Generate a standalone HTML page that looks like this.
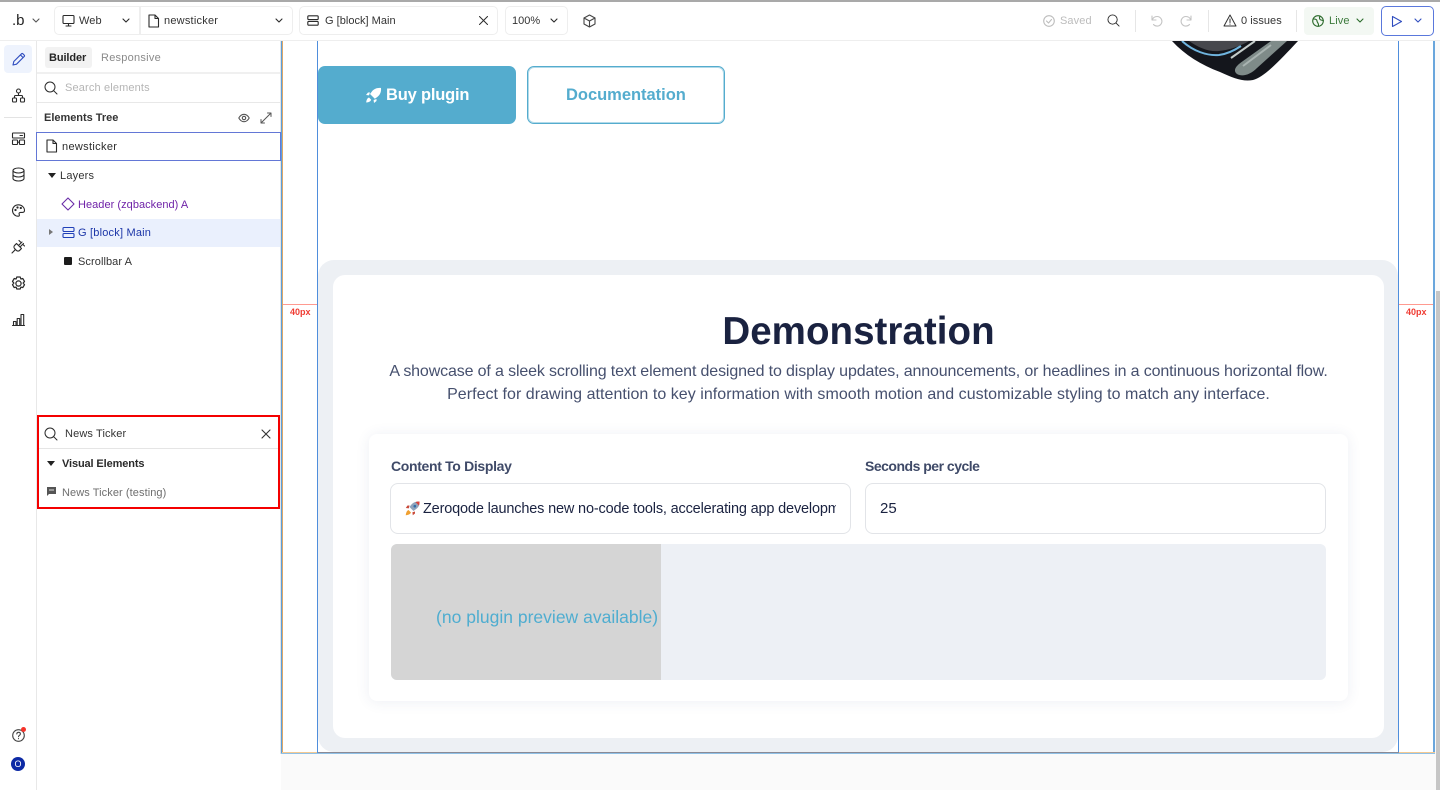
<!DOCTYPE html>
<html><head><meta charset="utf-8"><style>
*{box-sizing:border-box;margin:0;padding:0}
html,body{width:1440px;height:790px;overflow:hidden;background:#fff;font-family:"Liberation Sans",sans-serif}
#r{position:relative;width:1440px;height:790px;overflow:hidden}
.a{position:absolute}
.t{position:absolute;white-space:nowrap;line-height:16px;font-size:11px;color:#303030}
svg.i{position:absolute;fill:none;stroke:#2a2a2a;stroke-width:1.1;stroke-linecap:round;stroke-linejoin:round}
.bx{position:absolute;background:#fff;border:1px solid #eeeeee;border-radius:5px}
.vs{position:absolute;width:1px;background:#e6e6e6}
</style></head><body><div id="r">

<!-- canvas -->
<div class="a" style="left:281px;top:41px;width:1159px;height:749px;background:#fafafa"></div>
<div class="a" style="left:282px;top:41px;width:1153px;height:712px;background:#fff"></div>
<div class="a" style="left:281px;top:41px;width:2px;height:713px;background:#dfa868"></div>
<div class="a" style="left:281px;top:41px;width:1px;height:713px;background:#5a9fdc"></div>
<div class="a" style="left:1433px;top:41px;width:2px;height:713px;background:#6aa6dc"></div>
<div class="a" style="left:282px;top:752px;width:1153px;height:1px;background:#f5c990"></div>
<div class="a" style="left:281px;top:753px;width:1154px;height:1px;background:#8fc0e6"></div>
<div class="a" style="left:1436px;top:291px;width:4px;height:499px;background:#c6c6c6"></div>

<!-- image bit -->
<svg class="a" style="left:1165px;top:41px" width="135" height="42" viewBox="0 0 135 42">
<path d="M7 0 C20 14 36 24 55 31 C68 37 78 41 88 39 C100 36 118 16 133 0Z" fill="#14161c"/>
<path d="M24 0 C34 7 44 11 54 10 C64 9 76 5 84 0Z" fill="#47484d"/>
<path d="M17 0 C28 10 42 15 54 14 C62 13 70 9 76 5" fill="none" stroke="#6fb4de" stroke-width="2"/>
<path d="M72 33 C67 29 72 24 78 20 L106 0 L122 0 L92 27 C85 34 77 36 72 33Z" fill="#7f8b89"/>
<path d="M66 17 L90 0" stroke="#c4ccca" stroke-width="2" fill="none"/>
<path d="M78 25 L106 4" stroke="#a9b3b1" stroke-width="2" fill="none"/>
</svg>

<!-- buttons -->
<div class="a" style="left:318px;top:66px;width:198px;height:58px;background:#54acce;border-radius:7px"></div>
<svg class="a" style="left:365px;top:87px" width="17" height="17" viewBox="0 0 17 17" fill="#fff"><path d="M16 1c-4-.4-7 1-9.300 3.700L5 7l4.800 4.800 2.300-1.700C15 8 16.400 5 16 1zM5 5.500H3L1 8l3 .4zM11.500 12v2L9 16l-.4-3zM4 10.500c-1.500.5-2.500 2-2.800 5 3-.3 4.500-1.300 5-2.800z"/></svg>
<div class="t" style="left:386px;top:85px;font-size:16.500px;line-height:20px;font-weight:bold;color:#fff;letter-spacing:-.2px">Buy plugin</div>
<div class="a" style="left:527px;top:66px;width:198px;height:58px;background:#fff;border:1px solid #54acce;box-shadow:inset 0 0 0 1px rgba(84,172,206,.45);border-radius:7px"></div>
<div class="t" style="left:566px;top:85px;font-size:16.500px;line-height:20px;font-weight:bold;color:#54acce;letter-spacing:-.02px">Documentation</div>

<!-- guide + card -->
<div class="a" style="left:318px;top:260px;width:1080px;height:492px;background:#edf0f4;border-radius:16px"></div>
<div class="a" style="left:333px;top:275px;width:1051px;height:463px;background:#fff;border-radius:12px"></div>
<div class="a" style="left:317px;top:41px;width:1px;height:712px;background:#4f8edc"></div>
<div class="a" style="left:1398px;top:41px;width:1px;height:712px;background:#4f8edc"></div>
<div class="a" style="left:318px;top:752px;width:1081px;height:1px;background:#8a8a95"></div>
<div class="a" style="left:283px;top:304px;width:34px;height:1px;background:#ff9a90"></div>
<div class="a" style="left:1399px;top:304px;width:34px;height:1px;background:#ff9a90"></div>
<div class="t" style="left:290px;top:304px;font-size:9px;font-weight:bold;color:#ef3b32">40px</div>
<div class="t" style="left:1406px;top:304px;font-size:9px;font-weight:bold;color:#ef3b32">40px</div>

<div class="t" style="left:333px;width:1051px;text-align:center;top:309px;font-size:38.500px;line-height:46px;font-weight:bold;color:#1a2240;letter-spacing:.05px">Demonstration</div>
<div class="t" style="left:333px;width:1051px;text-align:center;top:361px;font-size:16px;line-height:22px;color:#46506e;letter-spacing:-.14px">A showcase of a sleek scrolling text element designed to display updates, announcements, or headlines in a continuous horizontal flow.</div>
<div class="t" style="left:333px;width:1051px;text-align:center;top:384px;font-size:16px;line-height:22px;color:#46506e;letter-spacing:.04px">Perfect for drawing attention to key information with smooth motion and customizable styling to match any interface.</div>

<div class="a" style="left:369px;top:434px;width:979px;height:267px;background:#fff;border-radius:8px;box-shadow:0 1px 14px rgba(60,80,130,.09)"></div>
<div class="t" style="left:391px;top:458px;font-size:14px;font-weight:bold;color:#3f4a68;letter-spacing:-.33px">Content To Display</div>
<div class="t" style="left:865px;top:458px;font-size:14px;font-weight:bold;color:#3f4a68;letter-spacing:-.5px">Seconds per cycle</div>
<div class="a" style="left:390px;top:483px;width:461px;height:51px;border:1px solid #e2e4e8;border-radius:8px;background:#fff"></div>
<div class="a" style="left:865px;top:483px;width:461px;height:51px;border:1px solid #e2e4e8;border-radius:8px;background:#fff"></div>
<svg class="a" style="left:405px;top:501px" width="15" height="15" viewBox="0 0 15 15"><path d="M14.500.5c-3.500-.3-6.500 1-8.500 3.500L4.500 6l4 4 2-1.500C13.500 6.500 14.800 4 14.500.5z" fill="#8fa3bb"/><path d="M14.500.5c-1.500-.1-2.800.1-4 .6l3.400 3.400c.5-1.200.7-2.600.6-4z" fill="#d8433a"/><circle cx="9.800" cy="5.200" r="1.300" fill="#2f6da8"/><path d="M4.500 4.500H2.500L.8 7l3 .4zM10 10.500v2L7.800 14.200l-.4-3z" fill="#c94a3a"/><path d="M3.500 9c-1.500.6-2.300 2-2.800 5.300 3.300-.5 4.700-1.300 5.300-2.800z" fill="#f0a030"/></svg>
<div class="a" style="left:423px;top:498px;width:413px;height:22px;overflow:hidden"><div class="t" style="left:0;top:0;font-size:14.500px;line-height:22px;color:#1a2240;letter-spacing:-.17px">Zeroqode launches new no-code tools, accelerating app development worldwide</div></div>
<div class="t" style="left:880px;top:498px;font-size:15px;line-height:22px;color:#1a2240">25</div>
<div class="a" style="left:391px;top:544px;width:935px;height:136px;background:#edf0f5;border-radius:6px"></div>
<div class="a" style="left:391px;top:544px;width:270px;height:136px;background:#d5d5d5;border-radius:6px 0 0 6px"></div>
<div class="t" style="left:436px;top:606px;font-size:17.500px;line-height:22px;color:#4fadd0;letter-spacing:.01px">(no plugin preview available)</div>

<!-- left rail & panel -->
<div class="a" style="left:0;top:41px;width:281px;height:749px;background:#fff"></div>
<div class="a" style="left:36px;top:41px;width:1px;height:749px;background:#e8e8e8"></div>
<div class="a" style="left:280px;top:41px;width:1px;height:713px;background:#e4e4e4"></div>
<div class="a" style="left:4px;top:45px;width:28px;height:28px;background:#eef3fd;border-radius:4px"></div>
<svg class="i" style="left:11px;top:52px;stroke:#2f4dbf" width="15" height="15" viewBox="0 0 15 15"><path d="M2 13l.8-3.500L10.500 1.800a1 1 0 0 1 1.400 0l1.300 1.300a1 1 0 0 1 0 1.400L5.500 12.200z M9.500 3l2.500 2.500"/></svg>
<svg class="i" style="left:11px;top:88px" width="15" height="15" viewBox="0 0 15 15"><circle cx="7.500" cy="3" r="2"/><rect x="1.500" y="10" width="4" height="4" rx="1"/><rect x="9.500" y="10" width="4" height="4" rx="1"/><path d="M7.500 5v2.500M3.500 10V8.500q0-1 1-1h6q1 0 1 1V10"/></svg>
<div class="a" style="left:4px;top:117px;width:28px;height:1px;background:#e3e3e3"></div>
<svg class="i" style="left:11px;top:131px" width="15" height="15" viewBox="0 0 15 15"><rect x="1.500" y="2" width="12" height="5" rx=".5"/><rect x="1.500" y="9" width="5" height="4.500" rx=".5"/><rect x="8.500" y="9" width="5" height="4.500" rx=".5"/><path d="M9 4.500h2.500M6.500 11.200h2"/></svg>
<svg class="i" style="left:11px;top:167px" width="15" height="15" viewBox="0 0 15 15"><ellipse cx="7.500" cy="3.500" rx="5.500" ry="2.500"/><path d="M2 3.500v8c0 1.400 2.500 2.500 5.500 2.500s5.500-1.100 5.500-2.500v-8M2 7.500c0 1.400 2.500 2.500 5.500 2.500s5.500-1.100 5.500-2.500"/></svg>
<svg class="i" style="left:11px;top:203px" width="15" height="15" viewBox="0 0 15 15"><path d="M7.500 1.800C3.800 1.800 1.500 4.500 1.500 7.500s2.500 5.700 5.500 5.700c1.500 0 1.600-1 1.200-1.800-.5-1 .1-2 1.300-2h2c1.200 0 2-.8 2-2 0-3-2.800-5.600-6-5.600z"/><circle cx="4.500" cy="7" r=".6"/><circle cx="6.500" cy="4.500" r=".6"/><circle cx="9.800" cy="5" r=".6"/></svg>
<svg class="i" style="left:11px;top:239px" width="15" height="15" viewBox="0 0 15 15"><path d="M1 14l2.800-2.800M5.500 4.500l5 5-1.800 1.800c-1 1-2.400.9-3.400 0l-1.600-1.600c-1-1-1-2.400 0-3.400zM7.500 6.500L11 3M9 8l3.500-3.500M8 1.500l1.500 1.500M12 5.500l1.500 1.500"/></svg>
<svg class="i" style="left:10px;top:275px" width="17" height="17" viewBox="0 0 15 15"><path d="M6 1.500h3l.6 1.700 1.700-.4 1.500 2.600-1.200 1.400 1.200 1.400-1.500 2.600-1.700-.4-.6 1.700H6l-.6-1.700-1.700.4-1.500-2.600 1.200-1.400-1.200-1.400 1.500-2.600 1.700.4z" transform="translate(0 .3)"/><circle cx="7.500" cy="7.500" r="2.300"/></svg>
<svg class="i" style="left:11px;top:312px" width="15" height="15" viewBox="0 0 15 15"><path d="M1.500 13.500h12M2.500 13.500v-4h2.500v4M6.200 13.500v-7h2.500v7M10 13.500V2.500h2.700v11"/></svg>
<svg class="i" style="left:12px;top:729px;stroke:#444" width="13" height="13" viewBox="0 0 13 13"><circle cx="6.500" cy="6.500" r="5.800"/><path d="M4.800 5c0-2.200 3.600-2.200 3.600 0 0 1.300-1.900 1.300-1.900 2.700M6.500 9.500v.2"/></svg>
<div class="a" style="left:21px;top:727px;width:5px;height:5px;border-radius:50%;background:#f5332a"></div>
<div class="a" style="left:11px;top:757px;width:14px;height:14px;border-radius:50%;background:#0d2aa5;color:#fff;font-size:9px;line-height:14px;text-align:center">O</div>

<div class="a" style="left:45px;top:47px;width:47px;height:21px;background:#f2f2f2;border-radius:3px"></div>
<div class="t" style="left:49px;top:50px;color:#242424;font-weight:bold;font-size:11px;letter-spacing:-.1px">Builder</div>
<div class="t" style="left:101px;top:50px;color:#8a8a8a;font-size:11px;letter-spacing:.25px">Responsive</div>
<div class="a" style="left:37px;top:72px;width:243px;height:2px;background:#f0f0f0"></div>
<svg class="i" style="left:44px;top:81px;stroke-width:1" width="14" height="14" viewBox="0 0 14 14"><circle cx="6" cy="6" r="5"/><path d="M9.800 9.800L13 13"/></svg>
<div class="t" style="left:65px;top:80px;color:#b5b5b5;letter-spacing:.15px">Search elements</div>
<div class="a" style="left:37px;top:102px;width:243px;height:1px;background:#e8e8e8"></div>
<div class="t" style="left:44px;top:110px;font-weight:bold;color:#333;font-size:11px;letter-spacing:-.02px">Elements Tree</div>
<svg class="i" style="left:238px;top:112px;stroke:#555" width="12" height="12" viewBox="0 0 12 12"><path d="M.8 6C2.200 3.500 4 2.300 6 2.300S9.800 3.500 11.200 6C9.800 8.500 8 9.700 6 9.700S2.200 8.500.8 6z"/><circle cx="6" cy="6" r="1.700"/></svg>
<svg class="i" style="left:260px;top:112px;stroke:#555;stroke-width:1" width="12" height="12" viewBox="0 0 12 12"><path d="M1 11l10-10M7.500 1H11v3.500M1 7.500V11h3.500"/></svg>
<div class="a" style="left:36px;top:132px;width:245px;height:29px;border:1px solid #6377d6;background:#fff"></div>
<svg class="i" style="left:45px;top:139px" width="13" height="14" viewBox="0 0 13 14"><path d="M2 1h6l3.500 3.500V13H2zM8 1v3.500h3.500"/></svg>
<div class="t" style="left:62px;top:139px;color:#2c2c2c;letter-spacing:.33px">newsticker</div>
<div class="a" style="left:48px;top:173px;width:0;height:0;border-left:4px solid transparent;border-right:4px solid transparent;border-top:5px solid #222"></div>
<div class="t" style="left:60px;top:168px;color:#333;font-size:11px;letter-spacing:.2px">Layers</div>
<svg class="i" style="left:61px;top:197px;stroke:#6a2ca8" width="14" height="14" viewBox="0 0 14 14"><path d="M7 1l6 6-6 6-6-6z"/></svg>
<div class="t" style="left:78px;top:197px;color:#6f22a8;letter-spacing:.04px">Header (zqbackend) A</div>
<div class="a" style="left:37px;top:219px;width:243px;height:28px;background:#eaf0fd"></div>
<div class="a" style="left:49px;top:229px;width:0;height:0;border-top:3.500px solid transparent;border-bottom:3.500px solid transparent;border-left:4.500px solid #777"></div>
<svg class="i" style="left:62px;top:226px;stroke:#2040b8" width="13" height="13" viewBox="0 0 13 13"><rect x="1" y="1.500" width="11" height="4" rx="1"/><rect x="1" y="7.500" width="11" height="4" rx="1"/></svg>
<div class="t" style="left:78px;top:225px;color:#1c36a8;letter-spacing:.2px">G [block] Main</div>
<div class="a" style="left:64px;top:257px;width:8px;height:8px;background:#1c1c1c;border-radius:1px"></div>
<div class="t" style="left:78px;top:254px;color:#333;letter-spacing:.08px">Scrollbar A</div>

<!-- red box -->
<div class="a" style="left:37px;top:415px;width:243px;height:94px;border:2px solid #f40000"></div>
<svg class="i" style="left:44px;top:427px;stroke-width:1" width="14" height="14" viewBox="0 0 14 14"><circle cx="6" cy="6" r="5"/><path d="M9.800 9.800L13 13"/></svg>
<div class="t" style="left:65px;top:426px;color:#333;letter-spacing:.13px">News Ticker</div>
<svg class="i" style="left:261px;top:429px;stroke:#333" width="10" height="10" viewBox="0 0 10 10"><path d="M1 1l8 8M9 1L1 9"/></svg>
<div class="a" style="left:39px;top:448px;width:239px;height:1px;background:#e5e5e5"></div>
<div class="a" style="left:47px;top:461px;width:0;height:0;border-left:4px solid transparent;border-right:4px solid transparent;border-top:5px solid #222"></div>
<div class="t" style="left:62px;top:456px;font-weight:bold;color:#2a2a2a;letter-spacing:-.12px">Visual Elements</div>
<svg class="a" style="left:47px;top:487px" width="9" height="9" viewBox="0 0 9 9"><path d="M0 0h9v7H2L0 9z" fill="#555"/><path d="M2 3h5" stroke="#fff" stroke-width=".8"/></svg>
<div class="t" style="left:62px;top:485px;color:#6e6e6e;letter-spacing:.08px">News Ticker (testing)</div>

<!-- top bar -->
<div class="a" style="left:0;top:0;width:1440px;height:41px;background:#fff;border-bottom:1px solid #eeeeee"></div>
<div class="a" style="left:0;top:0;width:1440px;height:2px;background:#a9a9a9"></div>
<div class="t" style="left:12px;top:12px;font-size:15px;line-height:18px;color:#222">.b</div>
<svg class="i" style="left:32px;top:18px;stroke:#555" width="8" height="5" viewBox="0 0 8 5"><path d="M1 1l3 3 3-3"/></svg>
<div class="bx" style="left:54px;top:6px;width:239px;height:29px"></div>
<div class="a" style="left:139px;top:7px;width:2px;height:27px;background:#eeeeee"></div>
<svg class="i" style="left:62px;top:14px" width="13" height="13" viewBox="0 0 13 13"><rect x="1" y="1.500" width="11" height="8" rx="1"/><path d="M4 12h5M6.500 9.500V12"/></svg>
<div class="t" style="left:79px;top:13px;color:#333;letter-spacing:.1px">Web</div>
<svg class="i" style="left:122px;top:18px" width="8" height="5" viewBox="0 0 8 5"><path d="M1 1l3 3 3-3"/></svg>
<svg class="i" style="left:147px;top:14px" width="13" height="14" viewBox="0 0 13 14"><path d="M2 1h6l3.500 3.500V13H2zM8 1v3.500h3.500"/></svg>
<div class="t" style="left:164px;top:13px;color:#333;letter-spacing:.22px">newsticker</div>
<svg class="i" style="left:275px;top:18px" width="8" height="5" viewBox="0 0 8 5"><path d="M1 1l3 3 3-3"/></svg>
<div class="bx" style="left:299px;top:6px;width:199px;height:29px"></div>
<svg class="i" style="left:307px;top:15px" width="12" height="11" viewBox="0 0 12 11"><rect x=".8" y=".8" width="10.400" height="3.800" rx="1"/><rect x=".8" y="6.400" width="10.400" height="3.800" rx="1"/></svg>
<div class="t" style="left:325px;top:13px;color:#333;letter-spacing:.02px">G [block] Main</div>
<svg class="i" style="left:479px;top:16px;stroke-width:1" width="9" height="9" viewBox="0 0 9 9"><path d="M.5.500l8 8M8.500.500l-8 8"/></svg>
<div class="bx" style="left:505px;top:6px;width:63px;height:29px"></div>
<div class="t" style="left:512px;top:13px;color:#333">100%</div>
<svg class="i" style="left:550px;top:18px" width="8" height="5" viewBox="0 0 8 5"><path d="M1 1l3 3 3-3"/></svg>
<svg class="i" style="left:583px;top:14px;stroke:#444" width="13" height="14" viewBox="0 0 13 14"><path d="M6.500 1l5.500 3v6l-5.500 3L1 10V4zM1 4l5.500 3L12 4M6.500 7v6"/></svg>

<svg class="i" style="left:1043px;top:15px;stroke:#bdbdbd" width="12" height="12" viewBox="0 0 12 12"><circle cx="6" cy="6" r="5.300"/><path d="M3.500 6l2 2 3-3.500"/></svg>
<div class="t" style="left:1060px;top:13px;color:#bcbcbc;letter-spacing:.1px">Saved</div>
<svg class="i" style="left:1107px;top:14px;stroke-width:1" width="13" height="13" viewBox="0 0 14 14"><circle cx="6" cy="6" r="5"/><path d="M9.800 9.800L13 13"/></svg>
<div class="vs" style="left:1135px;top:10px;height:22px"></div>
<svg class="i" style="left:1151px;top:15px;stroke:#c4c4c4" width="12" height="12" viewBox="0 0 12 12"><path d="M1 1v4h4M1.200 5C2 2.800 3.800 1.500 6 1.500a4.800 4.800 0 1 1-3.500 8"/></svg>
<svg class="i" style="left:1180px;top:15px;stroke:#c4c4c4" width="12" height="12" viewBox="0 0 12 12"><path d="M11 1v4H7M10.800 5C10 2.800 8.200 1.500 6 1.500a4.800 4.800 0 1 0 3.500 8"/></svg>
<div class="vs" style="left:1208px;top:10px;height:22px"></div>
<svg class="i" style="left:1223px;top:14px;stroke:#333;stroke-width:1" width="14" height="13" viewBox="0 0 14 13"><path d="M7 1l6 11H1zM7 5v3.500M7 10v.2"/></svg>
<div class="t" style="left:1241px;top:13px;color:#333;letter-spacing:.05px">0 issues</div>
<div class="vs" style="left:1296px;top:10px;height:22px"></div>
<div class="a" style="left:1304px;top:7px;width:70px;height:28px;background:#f3f8f3;border-radius:4px"></div>
<svg class="i" style="left:1312px;top:15px;stroke:#2a6a2a" width="12" height="12" viewBox="0 0 12 12"><circle cx="6" cy="6" r="5.300"/><path d="M1.500 4c2 0 3.500.5 3.500 2s2 2 1.500 5M8 1.200C7 3 7.500 4.500 9 5s2.300.5 2.300.5"/></svg>
<div class="t" style="left:1329px;top:13px;color:#3c7a3c;letter-spacing:.1px">Live</div>
<svg class="i" style="left:1356px;top:18px;stroke:#2a6a2a" width="8" height="5" viewBox="0 0 8 5"><path d="M1 1l3 3 3-3"/></svg>
<div class="a" style="left:1381px;top:6px;width:53px;height:30px;border:1px solid #5a78dc;border-radius:5px;background:#fff"></div>
<svg class="i" style="left:1391px;top:15px;stroke:#2f4dbf" width="12" height="13" viewBox="0 0 12 13"><path d="M1.500 1.500v10l9-5z"/></svg>
<svg class="i" style="left:1414px;top:18px;stroke:#2f4dbf" width="8" height="5" viewBox="0 0 8 5"><path d="M1 1l3 3 3-3"/></svg>
</div></body></html>
